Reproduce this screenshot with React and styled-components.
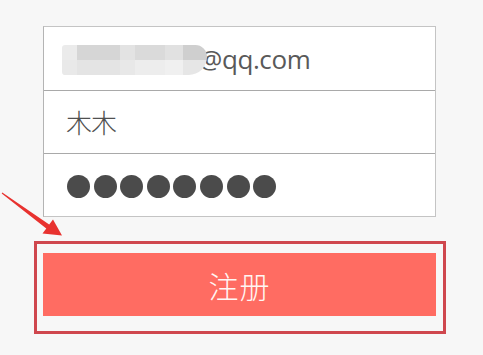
import React from 'react'
import styled, { createGlobalStyle } from 'styled-components'

const GlobalStyle = createGlobalStyle`
  html, body {
    margin: 0;
    padding: 0;
    background: #f7f7f7;
  }
  body {
    font-family: "Open Sans", "Noto Sans", "Noto Sans CJK SC", sans-serif;
  }
`

const Page = styled.div`
  position: relative;
  width: 483px;
  height: 355px;
  overflow: hidden;
  padding-top: 26px;
  box-sizing: border-box;
`

const Form = styled.div`
  margin-left: 43px;
  width: 393px;
  background: #fff;
  border: 1px solid #c4c4c4;
  border-left-color: #b4b4b4;
  box-sizing: border-box;
`

const Row = styled.div`
  display: flex;
  align-items: center;
  height: 63px;
  padding-left: ${p => p.$indent || 22}px;
  box-sizing: border-box;
  color: #555;
  & + & {
    border-top: 1px solid #a9a9a9;
  }
`

const Mosaic = styled.span`
  position: relative;
  z-index: 1;
  display: grid;
  grid-template-columns: 15px 43px 15px 30px 18px 24px;
  grid-template-rows: 15px 15px;
  width: 145px;
  margin-right: -8px;
  margin-top: 2px;
  border-radius: 4px 14px 22px 4px;
  overflow: hidden;
`

const Cell = styled.span`
  background: ${p => p.$tone};
`

const Email = styled.span`
  font-family: "Open Sans", sans-serif;
  font-size: 26px;
  color: #595959;
  letter-spacing: -0.4px;
`

const Name = styled.span`
  font-family: "Noto Sans CJK SC", sans-serif;
  font-size: 26px;
  font-weight: 300;
  color: #505050;
  letter-spacing: -1px;
  margin-top: -2px;
`

const Dots = styled.div`
  display: flex;
  gap: 3.6px;
  margin-top: 2px;
`

const Dot = styled.span`
  width: 23px;
  height: 23px;
  border-radius: 50%;
  background: #4b4b4b;
`

const Highlight = styled.div`
  margin: 24px 0 0 34px;
  width: 412px;
  height: 93px;
  border: 3px solid #cf474e;
  box-sizing: border-box;
  padding: 9px 7px 15px 6px;
`

const Button = styled.button`
  display: block;
  width: 100%;
  height: 100%;
  border: none;
  background: #ff6c62;
  color: #fff6f3;
  font-family: "Noto Sans CJK SC", sans-serif;
  font-size: 30px;
  font-weight: 300;
  letter-spacing: 1px;
  padding: 0;
  cursor: pointer;
`

const Arrow = styled.svg`
  position: absolute;
  left: 0;
  top: 185px;
`

const tones = [
  '#ebebeb', '#d6d6d6', '#e3e3e3', '#dadada', '#e1e1e1', '#cfcfcf',
  '#e9e9e9', '#e4e4e4', '#e8e8e8', '#ededed', '#f0f0f0', '#e6e6e6'
]

export default function App() {
  return (
    <Page>
      <GlobalStyle />
      <Form>
        <Row $indent={18}>
          <Mosaic>
            {tones.map((t, i) => (
              <Cell key={i} $tone={t} />
            ))}
          </Mosaic>
          <Email>@qq.com</Email>
        </Row>
        <Row>
          <Name>木木</Name>
        </Row>
        <Row $indent={23}>
          <Dots>
            {Array.from({ length: 8 }).map((_, i) => (
              <Dot key={i} />
            ))}
          </Dots>
        </Row>
      </Form>
      <Highlight>
        <Button>注册</Button>
      </Highlight>
      <Arrow width="70" height="60" viewBox="0 185 70 60">
        <polygon
          points="2.3,192.6 49.2,224.5 53,219.5 62,235.5 42.5,233.5 46.3,228.5 1.7,193.4"
          fill="#e8322f"
        />
      </Arrow>
    </Page>
  )
}
